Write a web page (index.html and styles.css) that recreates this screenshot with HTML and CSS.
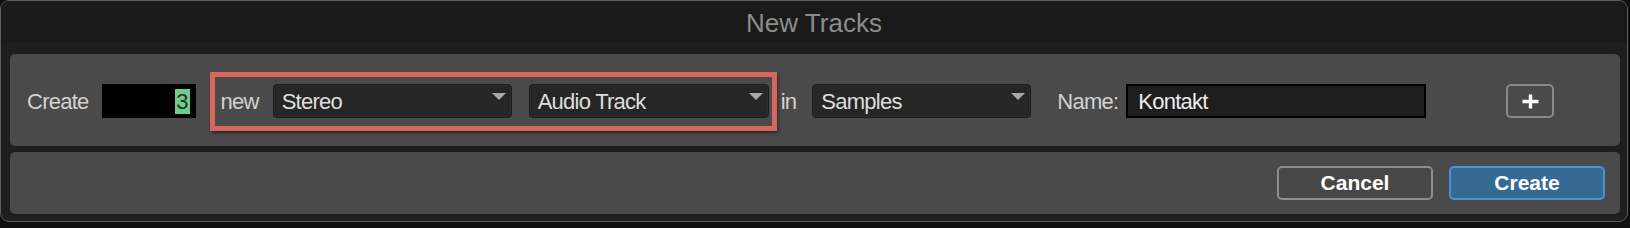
FILE: index.html
```html
<!DOCTYPE html>
<html>
<head>
<meta charset="utf-8">
<link rel="stylesheet" href="styles.css">
</head>
<body>
<div class="window">
  <div class="titlebar">New Tracks</div>
  <div class="panel panel-main">
    <span class="label label-create">Create</span>
    <div class="count-field"><span class="count-sel">3</span></div>
    <div class="highlight">
      <span class="label">new</span>
      <div class="dropdown dd-stereo"><span class="dd-text">Stereo</span><span class="dd-arrow"></span></div>
      <div class="dropdown dd-type"><span class="dd-text">Audio Track</span><span class="dd-arrow"></span></div>
    </div>
    <span class="label label-in">in</span>
    <div class="dropdown dd-samples"><span class="dd-text">Samples</span><span class="dd-arrow"></span></div>
    <span class="label label-name">Name:</span>
    <div class="name-field">Kontakt</div>
    <button class="plus-btn" type="button">
      <svg width="17" height="15" viewBox="0 0 17 15"><path d="M8.5 0.5V14.5M0.5 7.5H16.5" stroke="#ffffff" stroke-width="3.4" fill="none"/></svg>
    </button>
  </div>
  <div class="panel panel-actions">
    <button class="btn btn-cancel" type="button">Cancel</button>
    <button class="btn btn-create" type="button">Create</button>
  </div>
</div>
</body>
</html>
```
FILE: styles.css
```css
html, body {
  margin: 0;
  padding: 0;
  background: #0f0f0f;
}
body {
  width: 1630px;
  height: 228px;
  font-family: "Liberation Sans", Arial, sans-serif;
}
.window {
  width: 1628px;
  height: 222px;
  box-sizing: border-box;
  border: 1px solid #5e5e5e;
  border-radius: 9px;
  background: #1e1e1e;
  display: flex;
  flex-direction: column;
  padding: 0 7px 7px 9px;
  overflow: hidden;
}
.titlebar {
  height: 42px;
  margin: 0 -7px 0 -9px;
  background: #1a1a1a;
  color: #8d8d8d;
  font-size: 26px;
  line-height: 44px;
  text-align: center;
}
.panel {
  background: #4a4a4a;
  border-radius: 5px;
  display: flex;
  align-items: center;
  box-sizing: border-box;
}
.panel-main {
  margin-top: 11px;
  height: 92px;
  padding: 2px 0 0 17px;
}
.panel-actions {
  margin-top: 6px;
  height: 62px;
  justify-content: flex-end;
  padding-right: 15px;
  gap: 16px;
}
.label {
  font-size: 22px;
  letter-spacing: -0.75px;
  color: #d2d2d2;
  line-height: 32px;
  padding-top: 2px;
}
.count-field {
  margin-left: 13px;
  width: 94px;
  height: 34px;
  background: #000;
  display: flex;
  align-items: center;
  justify-content: flex-end;
  padding-right: 6px;
  box-sizing: border-box;
}
.count-sel {
  background: #6dce86;
  color: #2e2e2e;
  font-size: 22px;
  line-height: 25px;
  padding: 0 1px;
}
.highlight {
  margin-left: 14px;
  height: 59px;
  box-sizing: border-box;
  border: 5px solid #d9665c;
  padding: 0 3px 0 6px;
  display: flex;
  align-items: center;
  box-shadow: 1px 2px 3px rgba(0, 0, 0, 0.45);
}
.dropdown {
  height: 34px;
  box-sizing: border-box;
  background: #262626;
  border: 1px solid #1c1c1c;
  border-radius: 4px;
  display: flex;
  padding: 0 5px 0 8px;
  box-shadow: inset 0 0 0 1px #2c2c2c;
}
.dd-text {
  flex: 1;
  font-size: 22px;
  letter-spacing: -0.75px;
  color: #dedede;
  line-height: 31px;
  padding-top: 1px;
}
.dd-arrow {
  margin-top: 8px;
  width: 0;
  height: 0;
  border-left: 7px solid transparent;
  border-right: 7px solid transparent;
  border-top: 7px solid #a9a9a9;
}
.dd-stereo {
  margin-left: 14px;
  width: 239px;
}
.dd-type {
  margin-left: 17px;
  width: 240px;
}
.label-in {
  margin-left: 4px;
}
.dd-samples {
  margin-left: 16px;
  width: 219px;
}
.label-name {
  margin-left: 26px;
}
.name-field {
  margin-left: 8px;
  width: 300px;
  height: 34px;
  box-sizing: border-box;
  border: 2px solid #000;
  background: #1e1e1e;
  color: #ececec;
  font-size: 22px;
  letter-spacing: -0.75px;
  line-height: 29px;
  padding: 1px 0 0 10px;
}
.plus-btn {
  margin-left: 80px;
  width: 48px;
  height: 34px;
  box-sizing: border-box;
  border: 2px solid #8a8a8a;
  border-radius: 5px;
  background: transparent;
  display: flex;
  align-items: center;
  justify-content: center;
  padding: 0;
}
.btn {
  width: 156px;
  height: 34px;
  box-sizing: border-box;
  border-radius: 5px;
  font-family: "Liberation Sans", Arial, sans-serif;
  font-weight: bold;
  font-size: 21px;
  color: #ffffff;
  padding: 0;
  line-height: 30px;
}
.btn-cancel {
  border: 2px solid #8e8e8e;
  background: #474747;
}
.btn-create {
  border: 2px solid #4b92d4;
  background: #356a95;
}
```
